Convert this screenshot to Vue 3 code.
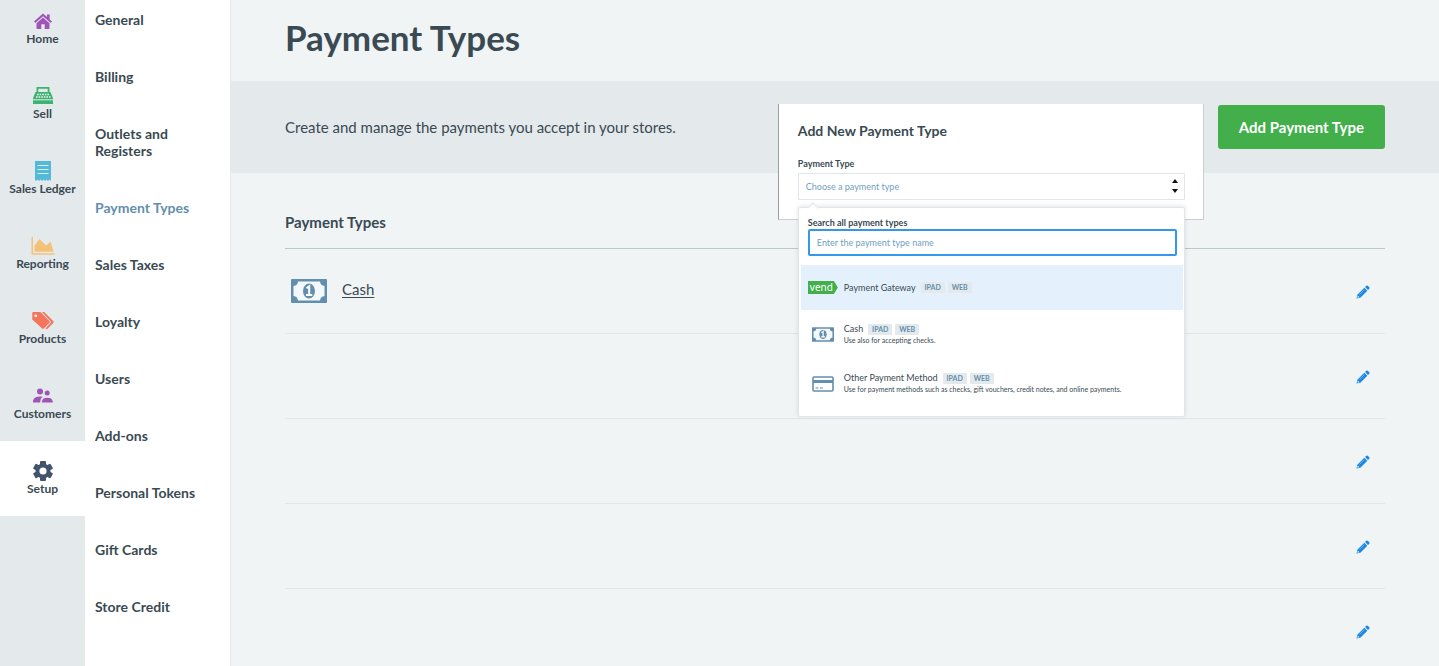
<script setup>
import { ref } from 'vue'

const nav = [
  { label: 'Home', icon: 'home' },
  { label: 'Sell', icon: 'sell' },
  { label: 'Sales Ledger', icon: 'ledger' },
  { label: 'Reporting', icon: 'report' },
  { label: 'Products', icon: 'tags' },
  { label: 'Customers', icon: 'people' },
  { label: 'Setup', icon: 'gear', active: true }
]

const sections = [
  'General', 'Billing', 'Outlets and Registers', 'Payment Types', 'Sales Taxes',
  'Loyalty', 'Users', 'Add-ons', 'Personal Tokens', 'Gift Cards', 'Store Credit'
]
const currentSection = 'Payment Types'

const payments = [{ name: 'Cash' }, {}, {}, {}, {}]

const options = [
  { name: 'Payment Gateway', icon: 'vend', highlighted: true },
  { name: 'Cash', icon: 'cash', note: 'Use also for accepting checks.' },
  {
    name: 'Other Payment Method',
    icon: 'card',
    note: 'Use for payment methods such as checks, gift vouchers, credit notes, and online payments.'
  }
]

const search = ref('')
const chosen = ref('')
</script>

<template>
  <div class="app">
    <svg class="defs" aria-hidden="true">
      <symbol id="banknote" viewBox="0 0 36 24">
        <rect x="0" y="0" width="36" height="24" rx="1" fill="#638fae" />
        <path d="M7 2.500H29A5 5 0 0 0 33.500 7V17A5 5 0 0 0 29 21.500H7A5 5 0 0 0 2.500 17V7A5 5 0 0 0 7 2.500Z" fill="#f3f8fa" />
        <ellipse cx="18" cy="12" rx="6" ry="7.500" fill="#638fae" />
        <path d="M15.500 9.200L18.200 7.200V15.800M15 16H21.300" fill="none" stroke="#fff" stroke-width="2" />
      </symbol>
    </svg>

    <nav class="rail" aria-label="Main">
      <ul>
        <li v-for="item in nav" :key="item.label">
          <a href="#" :class="{ active: item.active }">
            <svg class="rail-icon" viewBox="0 0 24 20" aria-hidden="true">
              <g v-if="item.icon === 'home'" fill="#9f55b6">
                <path d="M12 2.600L3 10.400L4.300 11.900L12 5.300L19.700 11.900L21 10.400L18.700 8.400V3.500H16V6Z" />
                <path d="M12 6.600L5.500 12.200V17.200Q5.500 18 6.300 18H10.300V13.200H13.700V18H17.700Q18.500 18 18.500 17.200V12.200Z" />
              </g>
              <g v-else-if="item.icon === 'sell'">
                <path fill="#3cb371" fill-rule="evenodd" d="M5.500 1H18.500V6H19.500L22 12.300V18H2V12.300L4.500 6H5.500ZM7.300 2.700V6H16.700V2.700Z" />
                <path d="M6 8.500H18.500M5 11H19.500" stroke="#eef3f1" stroke-width="1.300" stroke-dasharray="1.600 1" />
                <path d="M2 13.800H22" stroke="#e4e9ec" stroke-width="1" />
              </g>
              <g v-else-if="item.icon === 'ledger'">
                <path fill="#54b8d8" d="M4 0H20V20L18.500 18.500L17 20L15.500 18.500L14 20L12.500 18.500L11 20L9.500 18.500L8 20L6.500 18.500L5 20L4 19Z" />
                <path d="M6.500 4.500H17.500M6.500 8.500H17.500M6.500 12.500H17.500" stroke="#d9eff6" stroke-width="1" />
              </g>
              <g v-else-if="item.icon === 'report'" fill="#f3c278">
                <path d="M0.500 1H2V17.200H23.500V18.700H0.500Z" />
                <path d="M3.500 15.700V9.500L8.500 3L15 9.500L19.500 5.500L22.500 15.700Z" />
              </g>
              <g v-else-if="item.icon === 'tags'" fill="#f4745c">
                <path fill-rule="evenodd" d="M1.300 2Q1.300 1 2.300 1H9.500L18.500 10.200Q19.200 11 18.500 11.800L12.800 17.600Q12 18.400 11.200 17.600L1.300 8.500ZM4.800 3.200A1.500 1.500 0 1 0 4.800 6.200A1.500 1.500 0 1 0 4.800 3.200Z" />
                <path d="M11 1H13.200L22.400 10.300Q23.100 11 22.400 11.800L16.600 17.700Q15.500 18.700 14.500 17.600L20.200 11Z" />
              </g>
              <g v-else-if="item.icon === 'people'" fill="#9f55b6">
                <circle cx="9" cy="5.500" r="3" />
                <circle cx="16.200" cy="7" r="2.500" />
                <path d="M2 16.500V14.700Q3 10.500 9 10.500Q10.500 10.500 11.700 10.800Q9.300 12.300 9.300 15V16.500Z" />
                <path d="M11 16.500V15.200Q11.500 11.800 16.300 11.800Q21 11.800 21.700 15.200V16.500Z" />
              </g>
              <g v-else transform="translate(12 10)">
                <g fill="#44536c">
                  <circle r="7.500" />
                  <rect v-for="n in 3" :key="n" x="-3" y="-10" width="6" height="20" rx="1" :transform="`rotate(${n * 60})`" />
                </g>
                <circle r="3.600" fill="#fff" />
              </g>
            </svg>
            <span>{{ item.label }}</span>
          </a>
        </li>
      </ul>
    </nav>

    <nav class="sections" aria-label="Setup">
      <ul>
        <li v-for="s in sections" :key="s">
          <a href="#" :class="{ current: s === currentSection }">{{ s }}</a>
        </li>
      </ul>
    </nav>

    <main>
      <h1>Payment Types</h1>

      <div class="toolbar">
        <p>Create and manage the payments you accept in your stores.</p>
        <div class="add">
          <button type="button" class="primary">Add Payment Type</button>

          <section class="panel" aria-labelledby="panel-title">
            <h2 id="panel-title">Add New Payment Type</h2>
            <label for="type">Payment Type</label>
            <div class="select">
              <select id="type" v-model="chosen">
                <option value="">Choose a payment type</option>
              </select>
              <svg viewBox="0 0 6 16" aria-hidden="true">
                <path d="M0 5L3 1L6 5ZM0 11L3 15L6 11Z" fill="#111" />
              </svg>
            </div>

            <div class="popover">
              <div class="search">
                <label for="search">Search all payment types</label>
                <input id="search" v-model="search" type="text" placeholder="Enter the payment type name">
              </div>
              <ul>
                <li v-for="o in options" :key="o.name" :class="{ highlighted: o.highlighted }">
                  <div class="option-icon">
                    <span v-if="o.icon === 'vend'" class="vend">vend</span>
                    <svg v-else-if="o.icon === 'cash'" width="22" height="15" aria-hidden="true"><use href="#banknote" /></svg>
                    <svg v-else width="22" height="16" viewBox="0 0 22 16" aria-hidden="true">
                      <rect x="1" y="1" width="20" height="14" rx="1" fill="#fff" stroke="#638fae" stroke-width="1.600" />
                      <path d="M1 5.500H21" stroke="#638fae" stroke-width="3" />
                      <path d="M3.500 12H6.500M8 12H11" stroke="#638fae" stroke-width="1" />
                    </svg>
                  </div>
                  <div>
                    <div class="option-name">
                      {{ o.name }}
                      <span class="badges"><span>IPAD</span><span>WEB</span></span>
                    </div>
                    <div v-if="o.note" class="note">{{ o.note }}</div>
                  </div>
                </li>
              </ul>
            </div>
          </section>
        </div>
      </div>

      <table>
        <thead>
          <tr><th colspan="2" scope="col">Payment Types</th></tr>
        </thead>
        <tbody>
          <tr v-for="(p, i) in payments" :key="i">
            <td>
              <div v-if="p.name" class="payment">
                <svg width="36" height="24" aria-hidden="true"><use href="#banknote" /></svg>
                <a href="#">{{ p.name }}</a>
              </div>
            </td>
            <td class="edit">
              <button type="button" aria-label="Edit payment type">
                <svg width="14" height="14" viewBox="0 0 14 14" aria-hidden="true">
                  <path d="M0.500 13.500L1.300 9.700L8.300 2.700L11.300 5.700L4.300 12.700ZM9 2L10.300 0.700Q11 0.100 11.700 0.700L13.300 2.300Q13.900 3 13.300 3.700L12 5Z" fill="#1b87e5" />
                  <path d="M1.700 10.500L3.500 12.300L1.400 12.700Z" fill="#f0f4f5" />
                  <path d="M3.500 9.500L8.300 4.700" stroke="#8cc4f5" stroke-width="0.700" />
                </svg>
              </button>
            </td>
          </tr>
        </tbody>
      </table>
    </main>
  </div>
</template>

<style>
body {
  background: #f0f4f5;
  overflow: hidden;
}
</style>

<style scoped>
.app {
  display: flex;
  height: 100vh;
  overflow: hidden;
  font-family: Lato, sans-serif;
  color: #3a4a53;
}

.app * {
  box-sizing: border-box;
}

.defs {
  position: absolute;
  width: 0;
  height: 0;
}

ul {
  list-style: none;
  margin: 0;
  padding: 0;
}

h1, h2, p {
  margin: 0;
}

button, input, select {
  font-family: inherit;
}

.rail {
  flex: 0 0 85px;
  background: #e4e9ec;
}

.rail ul, .sections ul {
  margin-top: -9px;
}

.rail a {
  display: flex;
  flex-direction: column;
  align-items: center;
  height: 75px;
  padding-top: 20px;
  color: inherit;
  font-size: 12px;
  font-weight: 700;
  line-height: 16px;
  text-decoration: none;
  white-space: nowrap;
}

.rail a.active {
  background: #fff;
}

.rail-icon {
  width: 24px;
  height: 20px;
}

.sections {
  flex: 0 0 146px;
  background: #fff;
  border-right: 1px solid #e4e9ec;
}

.sections a {
  display: block;
  padding: 20px 25px 20px 10px;
  color: inherit;
  font-size: 14px;
  font-weight: 700;
  line-height: 17px;
  text-decoration: none;
}

.sections a.current {
  color: #638fae;
}

main {
  flex: 1;
  min-width: 0;
}

h1 {
  padding: 15px 54px 22px;
  font-size: 35px;
  line-height: 44px;
}

.toolbar {
  display: flex;
  align-items: center;
  justify-content: space-between;
  padding: 24px 54px;
  background: #e4e9ec;
}

.toolbar p {
  font-size: 15px;
  line-height: 20px;
}

.add {
  position: relative;
}

.primary {
  display: block;
  height: 44px;
  padding: 0 21px;
  border: 0;
  border-radius: 3px;
  background: #42af4b;
  color: #fff;
  font-size: 15px;
  font-weight: 700;
  white-space: nowrap;
}

.panel {
  position: absolute;
  top: -1px;
  right: calc(100% + 14px);
  width: 426px;
  padding: 18px 18px 19px 19px;
  background: #fff;
  border-left: 1px solid #9a9fa1;
  border-right: 1px solid #c9cfd1;
  border-bottom: 1px solid #c9cfd1;
}

.panel h2 {
  font-size: 14px;
  line-height: 18px;
}

.panel label {
  display: block;
  font-size: 9px;
  font-weight: 700;
  line-height: 12px;
}

.panel h2 + label {
  margin: 18px 0 3px;
}

.select {
  position: relative;
}

.select select {
  display: block;
  width: 100%;
  height: 27px;
  padding: 0 7px;
  border: 1px solid #dfe6ea;
  border-radius: 1px;
  background: #fff;
  color: #6f9fbf;
  font-size: 9px;
  appearance: none;
}

.select svg {
  position: absolute;
  top: 5px;
  right: 7px;
  width: 6px;
  height: 16px;
  pointer-events: none;
}

.popover {
  position: absolute;
  top: 103px;
  left: 19px;
  right: 18px;
  padding: 9px 1px 8px 2px;
  background: #fff;
  border: 1px solid #e1e6e8;
  border-radius: 2px;
  box-shadow: 0 -1px 4px rgba(60, 75, 85, 0.15);
}

.popover::before {
  content: '';
  position: absolute;
  top: -4px;
  left: 10px;
  width: 7px;
  height: 7px;
  background: #fff;
  border: solid #e1e6e8;
  border-width: 1px 0 0 1px;
  transform: rotate(45deg);
}

.search {
  padding: 0 6px 9px 7px;
}

.search label {
  line-height: 12px;
}

.search input {
  display: block;
  width: 100%;
  height: 27px;
  padding: 0 7px;
  border: 2px solid #3398ea;
  border-radius: 2px;
  outline: 0;
  color: inherit;
  font-size: 9px;
}

.search input::placeholder {
  color: #6f9fbf;
  opacity: 1;
}

.popover li {
  display: flex;
  align-items: center;
  gap: 6px;
  height: 49px;
  padding-left: 7px;
}

.popover li.highlighted {
  height: 45px;
  background: #e4f1fd;
}

.option-icon {
  display: flex;
  justify-content: center;
  width: 30px;
}

.vend {
  width: 30px;
  height: 13px;
  padding-left: 2px;
  background: #42af4b;
  clip-path: polygon(0 0, 87% 0, 100% 50%, 87% 100%, 0 100%);
  color: #fff;
  font-family: "Noto Sans", sans-serif;
  font-size: 10px;
  line-height: 12px;
}

.option-name {
  display: flex;
  align-items: center;
  gap: 5px;
  font-size: 9px;
  line-height: 12px;
}

.badges {
  display: flex;
  gap: 3px;
}

.badges span {
  width: 24px;
  border-radius: 1px;
  background: #e4e9ec;
  color: #638fae;
  font-size: 7px;
  font-weight: 700;
  line-height: 11px;
  text-align: center;
}

.note {
  font-size: 7px;
  line-height: 11px;
}

table {
  width: calc(100% - 108px);
  margin: 0 54px;
  border-collapse: separate;
  border-spacing: 0;
}

th {
  height: 76px;
  padding: 24px 0 2px;
  border-bottom: 1px solid #b9c8cd;
  font-size: 15px;
  line-height: 20px;
  text-align: left;
}

td {
  height: 85px;
  padding: 0;
  border-bottom: 1px solid #dfe5e8;
}

.payment {
  display: flex;
  align-items: flex-start;
  gap: 15px;
  padding-left: 6px;
}

.payment a {
  color: inherit;
  font-size: 15px;
  line-height: 20px;
  text-underline-offset: 2px;
}

.edit {
  width: 60px;
  padding: 2px 15px 0 0;
  text-align: right;
}

.edit button {
  display: inline-flex;
  padding: 0;
  border: 0;
  background: none;
}
</style>
